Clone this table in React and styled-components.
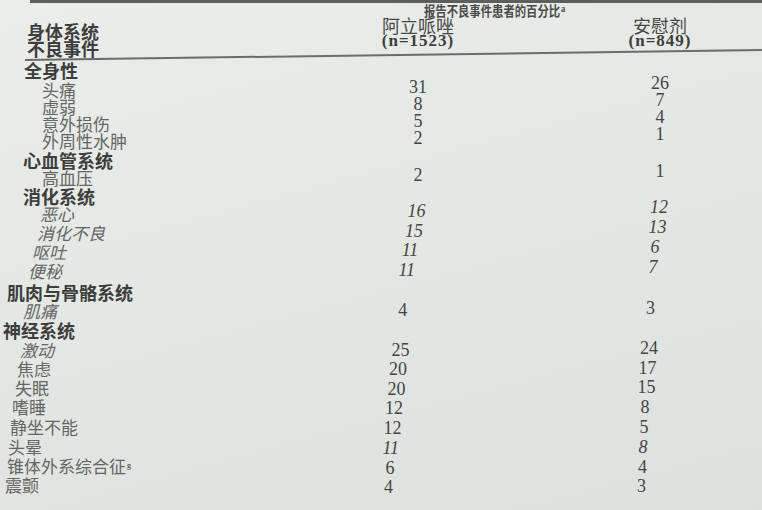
import React from 'react'
import styled, { createGlobalStyle } from 'styled-components'

const CJK = `"Noto Sans CJK SC", "Noto Sans", sans-serif`
const SERIF = `"Liberation Serif", "Noto Sans CJK SC", serif`

const GlobalStyle = createGlobalStyle`
  html, body {
    margin: 0;
    padding: 0;
  }
  body {
    width: 762px;
    height: 510px;
    overflow: hidden;
    background: #e5e8e4;
  }
`

// lean = how far the photographed page drifts left on that line
const rows = [
  { label: '全身性', cat: true, h: 20, lean: 0 },
  { label: '头痛', a: '31', b: '26', h: 17, lean: 0 },
  { label: '虚弱', a: '8', b: '7', h: 17, lean: 0 },
  { label: '意外损伤', a: '5', b: '4', h: 17, lean: 0 },
  { label: '外周性水肿', a: '2', b: '1', h: 19, lean: 0 },
  { label: '心血管系统', cat: true, h: 18, lean: -1 },
  { label: '高血压', a: '2', b: '1', h: 18, lean: 0 },
  { label: '消化系统', cat: true, h: 18, lean: -1 },
  { label: '恶心', a: '16', b: '12', h: 19, lean: -2, slant: true, it: true },
  { label: '消化不良', a: '15', b: '13', h: 19, lean: -5, slant: true, it: true },
  { label: '呕吐', a: '11', b: '6', h: 19, lean: -10, slant: true, it: true },
  { label: '便秘', a: '11', b: '7', h: 21, lean: -14, slant: true, it: true },
  { label: '肌肉与骨骼系统', cat: true, h: 19, lean: -17 },
  { label: '肌痛', a: '4', b: '3', h: 19, lean: -19, slant: true },
  { label: '神经系统', cat: true, h: 20, lean: -21 },
  { label: '激动', a: '25', b: '24', h: 19, lean: -22, slant: true },
  { label: '焦虑', a: '20', b: '17', h: 19, lean: -25 },
  { label: '失眠', a: '20', b: '15', h: 19, lean: -27 },
  { label: '嗜睡', a: '12', b: '8', h: 20, lean: -30 },
  { label: '静坐不能', a: '12', b: '5', h: 20, lean: -32 },
  { label: '头晕', a: '11', b: '8', h: 19, lean: -34, it: true },
  { label: '锥体外系综合征', sup: 'g', a: '6', b: '4', h: 19, lean: -35 },
  { label: '震颤', a: '4', b: '3', h: 19, lean: -37 },
]

const Page = styled.div`
  width: 762px;
  height: 510px;
  overflow: hidden;
  display: flex;
  flex-direction: column;
  background: linear-gradient(165deg, #eaedea 0%, #e4e8e4 45%, #dde1dd 100%);
  color: #444;
`

const TopRule = styled.div`
  height: 3px;
  margin-left: 30px;
  background: #5c5f5c;
`

const Header = styled.div`
  height: 56px;
  display: grid;
  grid-template-columns: 381px 74px 165px 80px;
  grid-template-rows: 14px 16px 16px;
`

const Title = styled.div`
  grid-column: 2 / 5;
  grid-row: 1;
  padding-left: 43px;
  font-family: ${CJK};
  font-size: 13.5px;
  line-height: 15px;
  font-weight: 700;
  color: #4a4c4a;
  white-space: nowrap;
  transform: scaleX(0.84);
  transform-origin: 43px center;
`

const StubHead = styled.div`
  grid-column: 1;
  grid-row: 1 / 4;
  padding: 20px 0 0 27px;
  font-family: ${CJK};
  font-size: 18px;
  line-height: 17px;
  font-weight: 700;
  color: #3d3f3d;
`

const ColHead = styled.div`
  grid-column: ${p => p.$col};
  grid-row: 2 / 4;
  display: flex;
  flex-direction: column;
  align-items: center;
  white-space: nowrap;
`

const ColName = styled.span`
  font-family: ${CJK};
  font-size: 18px;
  line-height: 16px;
  color: #474947;
`

const ColCount = styled.span`
  font-family: ${SERIF};
  font-size: 17px;
  line-height: 16px;
  font-weight: 700;
  letter-spacing: 1px;
  color: #3c3e3c;
`

const Sup = styled.sup`
  font-family: ${SERIF};
  font-size: ${p => p.$size || 8}px;
  line-height: 0;
  vertical-align: ${p => p.$raise || 5}px;
  font-weight: 700;
  margin-left: 1px;
`

const UnderRule = styled.div`
  height: 1.5px;
  margin: 0 0 0.5px 25px;
  background: #6a6d6a;
  transform: rotate(-0.78deg);
  transform-origin: left center;
`

const Row = styled.div`
  height: ${p => p.$h}px;
  display: flex;
  align-items: flex-start;
`

const Label = styled.div`
  width: ${p => 381 + 0.8 * p.$lean}px;
  flex: none;
  box-sizing: border-box;
  padding-left: ${p => (p.$cat ? 24 : 42) + p.$lean}px;
  font-family: ${CJK};
  font-size: ${p => (p.$cat ? 18 : 17)}px;
  line-height: 18px;
  font-weight: ${p => (p.$cat ? 700 : 400)};
  font-style: ${p => (p.$slant ? 'italic' : 'normal')};
  color: ${p => (p.$cat ? '#3c3e3c' : '#646664')};
  white-space: nowrap;
`

const Num = styled.div`
  flex: none;
  width: ${p => p.$w}px;
  margin-left: ${p => p.$gap || 0}px;
  margin-top: ${p => -p.$rise}px;
  text-align: center;
  font-family: ${SERIF};
  font-size: 18px;
  line-height: 18px;
  font-style: ${p => (p.$it ? 'italic' : 'normal')};
  color: #434543;
`

export default function App() {
  return (
    <>
      <GlobalStyle />
      <Page>
        <TopRule />
        <Header>
          <Title>
            报告不良事件患者的百分比<Sup $size={10} $raise={4}>a</Sup>
          </Title>
          <StubHead>
            身体系统
            <br />
            不良事件
          </StubHead>
          <ColHead $col={2}>
            <ColName>阿立哌唑</ColName>
            <ColCount>(n=1523)</ColCount>
          </ColHead>
          <ColHead $col={4}>
            <ColName>安慰剂</ColName>
            <ColCount>(n=849)</ColCount>
          </ColHead>
        </Header>
        <UnderRule />
        {rows.map(r => (
          <Row key={r.label} $h={r.h}>
            <Label $cat={r.cat} $lean={r.lean} $slant={r.slant}>
              {r.label}
              {r.sup && <Sup>{r.sup}</Sup>}
            </Label>
            {r.a && (
              <>
                <Num $w={74} $rise={3 + 0.13 * r.lean} $it={r.it}>
                  {r.a}
                </Num>
                <Num $w={80} $gap={165 - 0.3 * r.lean} $rise={7 + 0.22 * r.lean} $it={r.it}>
                  {r.b}
                </Num>
              </>
            )}
          </Row>
        ))}
      </Page>
    </>
  )
}
